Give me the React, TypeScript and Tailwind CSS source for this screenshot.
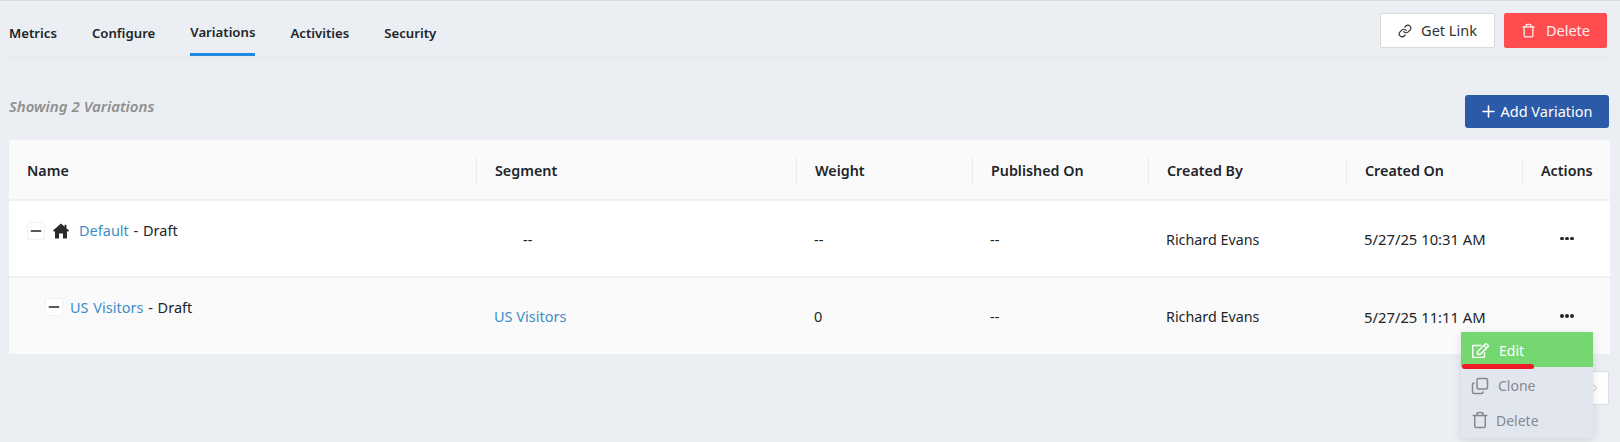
import { ChevronRight, Copy, Link, Minus, Plus, Trash } from "lucide-react";
import { FaRegEdit } from "react-icons/fa";

const font = { fontFamily: '"Noto Sans", sans-serif' };
const cols = "grid grid-cols-[467px_320px_176px_176px_198px_176px_88px]";

function Dots() {
  return (
    <div className="flex gap-[1.5px] ml-[38px]">
      <span className="w-[3.5px] h-[3.5px] rounded-full bg-[#212529]" />
      <span className="w-[3.5px] h-[3.5px] rounded-full bg-[#212529]" />
      <span className="w-[3.5px] h-[3.5px] rounded-full bg-[#212529]" />
    </div>
  );
}

function Head({ label, first }: { label: string; first?: boolean }) {
  return (
    <div className="flex items-center h-[59px]">
      <div className={`flex items-center h-[26px] w-full pt-[2px] ${first ? "pl-[18px]" : "pl-[18px] border-l border-[#ececec]"}`}>
        {label}
      </div>
    </div>
  );
}

function Cell({ children }: { children: React.ReactNode }) {
  return <div className="flex items-center pl-[18px] pt-[2px]">{children}</div>;
}

function ToggleBox() {
  return (
    <span className="flex items-center justify-center w-[18px] h-[18px] bg-white border border-[#f1f1f1] rounded-[2px]">
      <Minus size={16} strokeWidth={2.3} className="text-[#222]" />
    </span>
  );
}

function House() {
  return (
    <svg width="16" height="16" viewBox="0 0 16 16" className="ml-[8px] mr-[10px] mt-[1px] text-[#2b2b2b]" fill="currentColor">
      <path d="M8 .6 11.6 3.7V1.8H13.4V5.3L16 7.6 15.3 8.5H14V15.4H10V10.4H6V15.4H2V8.5H.7L0 7.6Z" />
    </svg>
  );
}

export default function App() {
  return (
    <div style={font} className="relative w-[1620px] h-[442px] overflow-hidden bg-[#ebeef3] border-t border-[#dcdcdc] text-[#212529] text-[14.5px]">
      <div className="flex items-start justify-between ml-[9px] mr-[10px] h-[58px] border-b-[3px] border-[#e9eaec]">
        <nav className="flex font-semibold text-[13.2px] gap-[35px]">
          <span className="pt-[23px]">Metrics</span>
          <span className="pt-[23px]">Configure</span>
          <span className="h-[55px] pt-[22px] border-b-[3px] border-[#1e88e5]">Variations</span>
          <span className="pt-[23px]">Activities</span>
          <span className="pt-[23px]">Security</span>
        </nav>
        <div className="flex gap-[9px] mt-[12px] mr-[3px]">
          <button className="flex items-center justify-center gap-[9px] w-[115px] h-[35px] bg-white border border-[#d9d9d9] rounded-[2px] text-[#333]">
            <Link size={14} /> Get Link
          </button>
          <button className="flex items-center justify-center gap-[10px] w-[103px] h-[35px] bg-[#ff4d4f] rounded-[2px] text-white/90">
            <Trash size={15} /> Delete
          </button>
        </div>
      </div>

      <div className="flex items-start justify-between ml-[9px] mr-[11px] mt-[36px] h-[45px]">
        <span className="italic font-semibold text-[#8f8f8f] text-[15px]">Showing 2 Variations</span>
        <button className="flex items-center justify-center gap-[3px] w-[144px] h-[33px] pr-[3px] bg-[#2a5aa8] rounded-[3px] text-white text-[14.5px]">
          <Plus size={19} /> Add Variation
        </button>
      </div>

      <div className="ml-[9px] w-[1601px]">
        <div className={`${cols} bg-[#fafafa] border-b-2 border-[#f0f0f0] font-semibold text-[14.3px]`}>
          <Head label="Name" first />
          <Head label="Segment" />
          <Head label="Weight" />
          <Head label="Published On" />
          <Head label="Created By" />
          <Head label="Created On" />
          <Head label="Actions" />
        </div>
        <div className={`${cols} bg-white h-[77px] border-b-2 border-[#f0f0f0]`}>
          <div className="flex items-start pl-[18px] pt-[21px]">
            <ToggleBox />
            <House />
            <span className="leading-[17px] [word-spacing:1px]"><span className="text-[#3f8ec6]">Default</span> - Draft</span>
          </div>
          <Cell><span className="ml-[29px]">--</span></Cell>
          <Cell>--</Cell>
          <Cell>--</Cell>
          <Cell><span className="text-[14.3px]">Richard Evans</span></Cell>
          <Cell><span className="text-[14.8px]">5/27/25 10:31 AM</span></Cell>
          <div className="flex items-center"><Dots /></div>
        </div>
        <div className={`${cols} bg-[#fafafa] h-[76px]`}>
          <div className="flex items-start pl-[36px] pt-[20px]">
            <ToggleBox />
            <span className="ml-[7px] leading-[18px] [word-spacing:1px]"><span className="text-[#3f8ec6]">US Visitors</span> - Draft</span>
          </div>
          <Cell><span className="text-[#3f8ec6]">US Visitors</span></Cell>
          <Cell>0</Cell>
          <Cell>--</Cell>
          <Cell><span className="text-[14.3px]">Richard Evans</span></Cell>
          <Cell><span className="text-[14.8px]">5/27/25 11:11 AM</span></Cell>
          <div className="flex items-center"><Dots /></div>
        </div>
      </div>

      <div className="flex justify-end mr-[11px] mt-[17px]">
        <div className="flex items-center justify-end w-[60px] h-[34px] pr-[7px] bg-white border border-[#dcdcdc] rounded-[2px] text-[#bbb]">
          <ChevronRight size={12} />
        </div>
      </div>

      <div className="absolute left-[1461px] top-[331px] w-[132px] h-[106px] bg-[#e2e7ef] rounded-b-[3px] shadow-[0_2px_10px_rgba(0,0,0,0.12)] text-[#85888f] text-[14px]">
        <div className="relative flex items-center h-[35px] pl-[11px] pt-[1px] bg-[#75d76f] text-white">
          <FaRegEdit size={17} />
          <span className="ml-[10px]">Edit</span>
          <span className="absolute left-[1px] top-[32px] w-[72px] h-[5px] rounded-full bg-[#ee1c25]" />
        </div>
        <div className="flex items-center h-[35px] pl-[10px] pt-[2px]">
          <Copy size={18} className="-scale-y-100" />
          <span className="ml-[9px]">Clone</span>
        </div>
        <div className="flex items-center h-[36px] pl-[10px]">
          <Trash size={18} />
          <span className="ml-[7px]">Delete</span>
        </div>
      </div>
    </div>
  );
}
